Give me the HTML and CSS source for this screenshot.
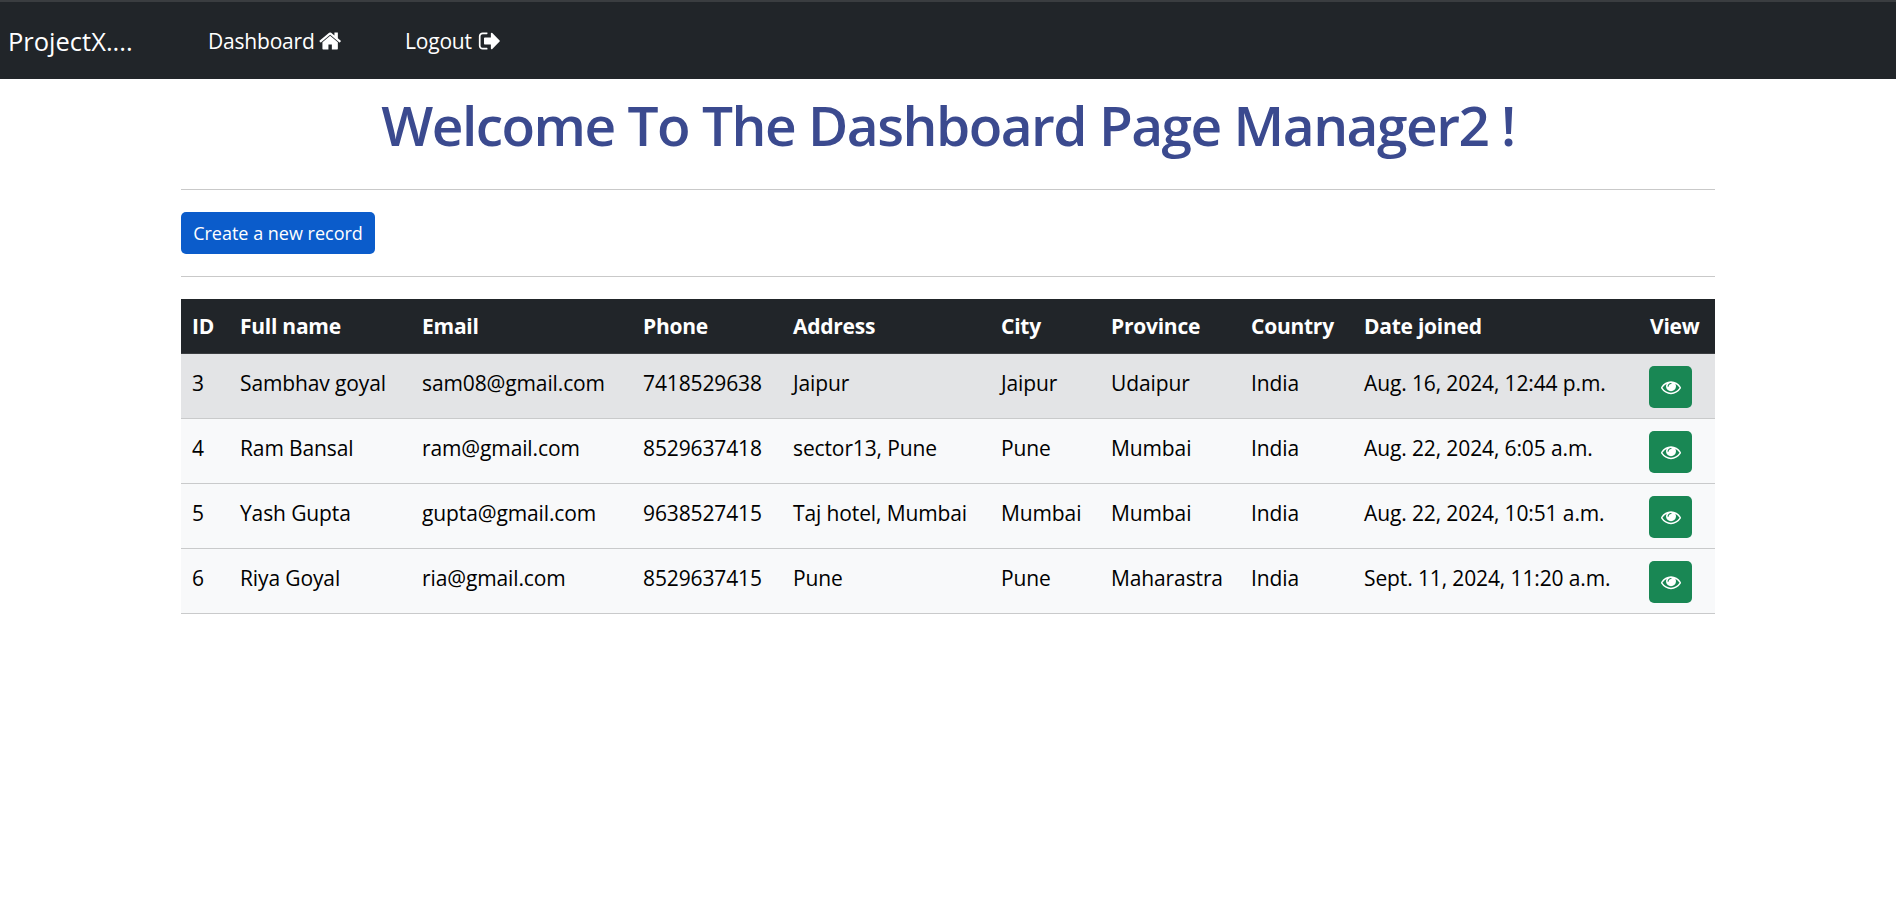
FILE: index.html
```html
<!DOCTYPE html>
<html lang="en">
<head>
<meta charset="utf-8">
<title>Dashboard</title>
<link rel="stylesheet" href="styles.css">
</head>
<body>
<svg class="sprites" width="0" height="0" aria-hidden="true">
  <symbol id="i-home" viewBox="0 0 1792 1792"><path d="M1408 992v480q0 26-19 45t-45 19h-384v-384h-256v384h-384q-26 0-45-19t-19-45v-480q0-1 .5-3t.5-3l575-474 575 474q1 2 1 6zm223-69l-62 74q-8 9-21 11h-3q-13 0-21-7l-692-577-692 577q-12 8-24 7-13-2-21-11l-62-74q-8-10-7-23.5t11-21.5l719-599q32-26 76-26t76 26l244 204v-195q0-14 9-23t23-9h192q14 0 23 9t9 23v408l219 182q10 8 11 21.5t-7 23.5z"/></symbol>
  <symbol id="i-out" viewBox="0 0 1792 1792"><path d="M704 1440q0 4 1 20t.5 26.5-3 23.5-10 19.5-20.5 6.5h-320q-119 0-203.5-84.5t-84.5-203.5v-704q0-119 84.5-203.5t203.5-84.5h320q13 0 22.5 9.5t9.5 22.5q0 4 1 20t.5 26.5-3 23.5-10 19.5-20.5 6.5h-320q-66 0-113 47t-47 113v704q0 66 47 113t113 47h312l11.5 1 11.5 3 8 5.5 7 9 2 13.5zm928-544q0 26-19 45l-544 544q-19 19-45 19t-45-19-19-45v-288h-448q-26 0-45-19t-19-45v-384q0-26 19-45t45-19h448v-288q0-26 19-45t45-19 45 19l544 544q19 19 19 45z"/></symbol>
  <symbol id="i-eye" viewBox="0 0 1792 1792"><path d="M1664 960q-152-236-381-353 61 104 61 225 0 185-131.5 316.5t-316.5 131.5-316.5-131.5-131.5-316.5q0-121 61-225-229 117-381 353 133 205 333.5 326.5t434.5 121.5 434.5-121.5 333.5-326.5zm-720-384q0-20-14-34t-34-14q-125 0-214.5 89.5t-89.5 214.5q0 20 14 34t34 14 34-14 14-34q0-86 61-147t147-61q20 0 34-14t14-34zm848 384q0 34-20 69-140 230-376.5 368.5t-499.5 138.5-499.5-139-376.5-368q-20-35-20-69t20-69q140-229 376.5-368t499.5-139 499.5 139 376.5 368q20 35 20 69z"/></symbol>
</svg>
<nav class="navbar">
  <a class="brand" href="#">ProjectX....</a>
  <a class="nav-link nav-dash" href="#">Dashboard <svg class="nav-icon"><use href="#i-home"/></svg></a>
  <a class="nav-link nav-out" href="#">Logout <svg class="nav-icon"><use href="#i-out"/></svg></a>
</nav>
<main class="container">
  <h1 class="title">Welcome To The Dashboard Page Manager2 !</h1>
  <hr class="rule">
  <a class="btn-new" href="#">Create a new record</a>
  <hr class="rule">
  <table class="records">
    <colgroup>
      <col class="c-id"><col class="c-name"><col class="c-email"><col class="c-phone"><col class="c-addr"><col class="c-city"><col class="c-prov"><col class="c-country"><col class="c-date"><col class="c-view">
    </colgroup>
    <thead>
      <tr><th>ID</th><th>Full name</th><th>Email</th><th>Phone</th><th>Address</th><th>City</th><th>Province</th><th>Country</th><th>Date joined</th><th>View</th></tr>
    </thead>
    <tbody>
      <tr class="active"><td>3</td><td>Sambhav goyal</td><td>sam08@gmail.com</td><td>7418529638</td><td>Jaipur</td><td>Jaipur</td><td>Udaipur</td><td>India</td><td>Aug. 16, 2024, 12:44 p.m.</td><td class="act"><a class="btn-view" href="#"><svg class="eye"><use href="#i-eye"/></svg></a></td></tr>
      <tr><td>4</td><td>Ram Bansal</td><td>ram@gmail.com</td><td>8529637418</td><td>sector13, Pune</td><td>Pune</td><td>Mumbai</td><td>India</td><td>Aug. 22, 2024, 6:05 a.m.</td><td class="act"><a class="btn-view" href="#"><svg class="eye"><use href="#i-eye"/></svg></a></td></tr>
      <tr><td>5</td><td>Yash Gupta</td><td>gupta@gmail.com</td><td>9638527415</td><td>Taj hotel, Mumbai</td><td>Mumbai</td><td>Mumbai</td><td>India</td><td>Aug. 22, 2024, 10:51 a.m.</td><td class="act"><a class="btn-view" href="#"><svg class="eye"><use href="#i-eye"/></svg></a></td></tr>
      <tr><td>6</td><td>Riya Goyal</td><td>ria@gmail.com</td><td>8529637415</td><td>Pune</td><td>Pune</td><td>Maharastra</td><td>India</td><td>Sept. 11, 2024, 11:20 a.m.</td><td class="act"><a class="btn-view" href="#"><svg class="eye"><use href="#i-eye"/></svg></a></td></tr>
    </tbody>
  </table>
</main>
</body>
</html>
```
FILE: styles.css
```css
* { box-sizing: border-box; }
html, body { margin: 0; padding: 0; }
body {
  font-family: "Open Sans", "Noto Sans", sans-serif;
  font-size: 21px;
  color: #000;
  background: #fff;
  height: 917px;
  overflow: hidden;
}
a { text-decoration: none; }
.sprites { position: absolute; }

.navbar {
  display: flex;
  align-items: center;
  height: 79px;
  background: #212529;
  border-top: 2px solid #3a3d40;
  padding-left: 8px;
}
.brand {
  color: #fff;
  font-size: 25.5px;
  width: 200px;
}
.nav-link {
  display: flex;
  align-items: center;
  gap: 4px;
  color: #fff;
  font-size: 21px;
  letter-spacing: -0.2px;
}
.nav-dash { width: 197px; }
.nav-out { gap: 6px; }
.nav-icon { width: 24px; height: 24px; fill: #fff; }

.container {
  width: 1534px;
  margin: 0 0 0 181px;
}
.title {
  margin: 0;
  height: 110px;
  line-height: 92px;
  font-size: 55px;
  font-weight: 600;
  text-align: center;
  color: #3b4a8f;
  letter-spacing: -1.5px;
}
.rule {
  margin: 0;
  border: 0;
  border-top: 1px solid #c9c9c9;
}
.btn-new {
  display: block;
  width: 194px;
  height: 42px;
  margin: 22px 0;
  background: #0b5ccb;
  color: #fff;
  border-radius: 5px;
  font-size: 18px;
  line-height: 42px;
  text-align: center;
}

.records {
  width: 1534px;
  margin-top: 22px;
  border-collapse: collapse;
  table-layout: fixed;
}
.c-id { width: 48px; }
.c-name { width: 182px; }
.c-email { width: 221px; }
.c-phone { width: 150px; }
.c-addr { width: 208px; }
.c-city { width: 110px; }
.c-prov { width: 140px; }
.c-country { width: 113px; }
.c-date { width: 286px; }
.c-view { width: 76px; }

.records th, .records td {
  text-align: left;
  white-space: nowrap;
}
.records th {
  height: 54px;
  padding: 1px 0 0 11px;
  background: #212529;
  color: #fff;
  font-weight: 700;
  font-size: 21px;
  letter-spacing: -0.25px;
  border-bottom: 1px solid #3a3d40;
}
.records td {
  height: 65px;
  padding: 0 0 6px 11px;
  letter-spacing: -0.12px;
  background: #f8f9fa;
  border-bottom: 1px solid #c9cacb;
}
.records .active td { background: #e3e4e6; }
.records .act { padding: 0 0 0 10px; }
.btn-view {
  display: flex;
  align-items: center;
  justify-content: center;
  width: 43px;
  height: 42px;
  margin-top: 2px;
  background: #198754;
  border-radius: 5px;
}
.eye { width: 20px; height: 20px; fill: #fff; }
```
